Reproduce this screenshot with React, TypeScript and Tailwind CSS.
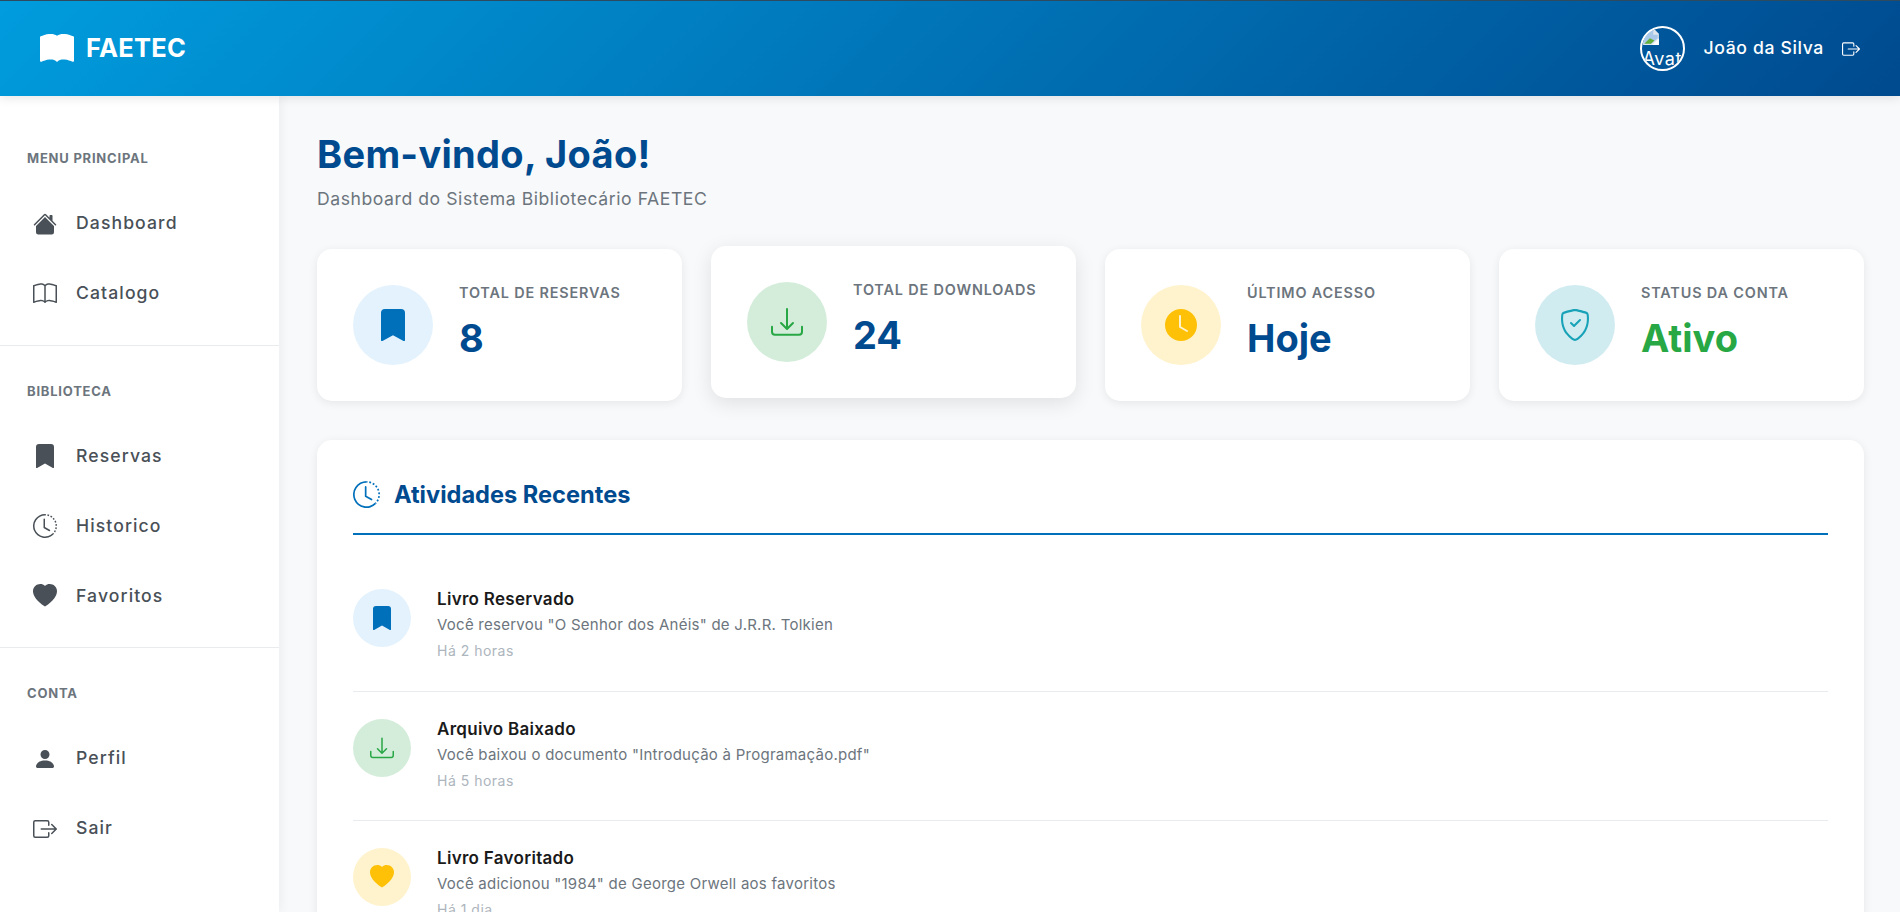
import {
  BsBook,
  BsBookFill,
  BsBookmarkFill,
  BsBoxArrowRight,
  BsClockFill,
  BsClockHistory,
  BsDownload,
  BsHeartFill,
  BsHouseFill,
  BsPersonFill,
  BsShieldCheck,
} from "react-icons/bs";

const menu = [
  {
    title: "MENU PRINCIPAL",
    items: [
      { label: "Dashboard", icon: BsHouseFill },
      { label: "Catalogo", icon: BsBook },
    ],
  },
  {
    title: "BIBLIOTECA",
    items: [
      { label: "Reservas", icon: BsBookmarkFill },
      { label: "Historico", icon: BsClockHistory },
      { label: "Favoritos", icon: BsHeartFill },
    ],
  },
  {
    title: "CONTA",
    items: [
      { label: "Perfil", icon: BsPersonFill },
      { label: "Sair", icon: BsBoxArrowRight },
    ],
  },
];

const activities = [
  {
    title: "Livro Reservado",
    text: 'Você reservou "O Senhor dos Anéis" de J.R.R. Tolkien',
    time: "Há 2 horas",
    icon: BsBookmarkFill,
    tone: "bg-[#e3f2fd] text-[#0070bb]",
  },
  {
    title: "Arquivo Baixado",
    text: 'Você baixou o documento "Introdução à Programação.pdf"',
    time: "Há 5 horas",
    icon: BsDownload,
    tone: "bg-[#d4edda] text-[#28a745]",
  },
  {
    title: "Livro Favoritado",
    text: 'Você adicionou "1984" de George Orwell aos favoritos',
    time: "Há 1 dia",
    icon: BsHeartFill,
    tone: "bg-[#fff3cd] text-[#ffc107]",
  },
];

function Avatar() {
  // the reference shows a broken image: the browser's icon plus the clipped alt text
  return (
    <div className="h-[45px] w-[45px] shrink-0 overflow-hidden rounded-full border-2 border-white text-[18px] leading-[26px] tracking-[0.6px] text-white">
      <svg width="18" height="18" viewBox="0 0 16 16" className="block">
        <path d="M1 1h10l4 4v10H1z" fill="#dfe6ee" />
        <path d="M2 2h8v4h4v3L8 14H2z" fill="#a9c8ea" />
        <path d="M2 14l5-5 4 2-3 3z" fill="#63b13c" />
        <path d="M9 15l6-6v6z" fill="#ffffff" />
      </svg>
      <div className="whitespace-nowrap">Avatar</div>
    </div>
  );
}

type StatProps = {
  label: string;
  value: string;
  icon: React.ComponentType<{ className?: string }>;
  tone: string;
  valueClass?: string;
  raised?: boolean;
};

function Stat({ label, value, icon: Icon, tone, valueClass, raised }: StatProps) {
  return (
    <div
      className={`flex h-[152px] items-center gap-[26px] rounded-[15px] bg-white px-[36px] ${
        raised ? "-translate-y-[3px] shadow-[0_5px_20px_rgba(0,0,0,0.1)]" : "shadow-[0_2px_10px_rgba(0,0,0,0.08)]"
      }`}
    >
      <div className={`flex h-[80px] w-[80px] shrink-0 items-center justify-center rounded-full ${tone}`}>
        <Icon className="h-[32px] w-[32px]" />
      </div>
      <div className="pb-[4px]">
        <div className="text-[14.4px] leading-[21px] font-semibold tracking-[0.85px] text-[#6c757d]">{label}</div>
        <div className={`mt-[8px] text-[38px] leading-[54px] font-bold ${valueClass ?? "text-[#004a8f]"}`}>{value}</div>
      </div>
    </div>
  );
}

export default function App() {
  return (
    <div className="flex h-screen flex-col overflow-hidden bg-[#f8f9fa] font-['Inter','Liberation_Sans',sans-serif]">
      {/* Header */}
      <header className="z-10 flex h-[96px] shrink-0 items-center justify-between border-t border-[#2d4a5e] bg-[linear-gradient(135deg,#009cdd,#004a8f)] px-[40px] text-white shadow-[0_2px_10px_rgba(0,0,0,0.1)]">
        <div className="flex items-center gap-[12px]">
          <BsBookFill className="h-[34px] w-[34px]" />
          <span className="text-[25.5px] font-bold tracking-[0.01em]">FAETEC</span>
        </div>
        <div className="flex items-center gap-[18px]">
          <Avatar />
          <span className="text-[17.6px] font-medium tracking-[0.65px]">João da Silva</span>
          <BsBoxArrowRight className="h-[18px] w-[18px]" />
        </div>
      </header>

      <div className="flex min-h-0 flex-1">
        {/* Sidebar */}
        <aside className="w-[279px] shrink-0 bg-white pt-[17px] shadow-[2px_0_10px_rgba(0,0,0,0.05)]">
          {menu.map((section, i) => (
            <div
              key={section.title}
              className={i < menu.length - 1 ? "border-b border-[#e9ecef] pt-[36px] pb-[16px]" : "pt-[36px]"}
            >
              <h3 className="px-[27px] text-[13px] font-bold tracking-[0.78px] text-[#6c757d]">
                {section.title}
              </h3>
              <ul className="mt-[20px]">
                {section.items.map(({ label, icon: Icon }) => (
                  <li key={label} className="flex h-[70px] items-center gap-[19px] px-[33px] text-[17.6px] font-medium tracking-[1.1px] text-[#495057]">
                    <Icon className="h-[24px] w-[24px] shrink-0" />
                    {label}
                  </li>
                ))}
              </ul>
            </div>
          ))}
        </aside>

        {/* Main */}
        <main className="min-w-0 flex-1 overflow-hidden pt-[31px] pr-[36px] pl-[38px]">
          <h1 className="text-[38px] leading-[54px] font-bold tracking-[0.3px] text-[#004a8f]">Bem-vindo, João!</h1>
          <p className="mt-[6px] text-[17.6px] leading-[24px] tracking-[0.56px] text-[#6c757d]">Dashboard do Sistema Bibliotecário FAETEC</p>

          <div className="mt-[38px] grid grid-cols-4 gap-[29px]">
            <Stat label="TOTAL DE RESERVAS" value="8" icon={BsBookmarkFill} tone="bg-[#e3f2fd] text-[#0070bb]" />
            <Stat label="TOTAL DE DOWNLOADS" value="24" icon={BsDownload} tone="bg-[#d4edda] text-[#28a745]" raised />
            <Stat label="ÚLTIMO ACESSO" value="Hoje" icon={BsClockFill} tone="bg-[#fff3cd] text-[#ffc107]" />
            <Stat label="STATUS DA CONTA" value="Ativo" valueClass="text-[#28a745]" icon={BsShieldCheck} tone="bg-[#d1ecf1] text-[#17a2b8]" />
          </div>

          <section className="mt-[39px] rounded-[15px] bg-white px-[36px] pt-[38px] shadow-[0_2px_10px_rgba(0,0,0,0.08)]">
            <div className="flex items-center gap-[14px] border-b-2 border-[#0070bb] pb-[22px]">
              <BsClockHistory className="h-[27px] w-[27px] text-[#0070bb]" />
              <h2 className="text-[23.6px] leading-[33px] font-bold text-[#004a8f]">Atividades Recentes</h2>
            </div>
            <div className="mt-[27px]">
              {activities.map((a) => (
                <div key={a.title} className="flex h-[129.5px] gap-[26px] border-b border-[#e9ecef] pt-[24px]">
                  <div className={`mt-[3px] flex h-[58px] w-[58px] shrink-0 items-center justify-center rounded-full ${a.tone}`}>
                    <a.icon className="h-[24px] w-[24px]" />
                  </div>
                  <div>
                    <div className="text-[17px] leading-[26px] font-semibold tracking-[0.3px] text-[#1a1a1a]">{a.title}</div>
                    <div className="text-[15px] leading-[26px] tracking-[0.25px] text-[#6c757d]">{a.text}</div>
                    <div className="text-[14px] leading-[26px] tracking-[0.5px] text-[#adb5bd]">{a.time}</div>
                  </div>
                </div>
              ))}
            </div>
          </section>
        </main>
      </div>
    </div>
  );
}
